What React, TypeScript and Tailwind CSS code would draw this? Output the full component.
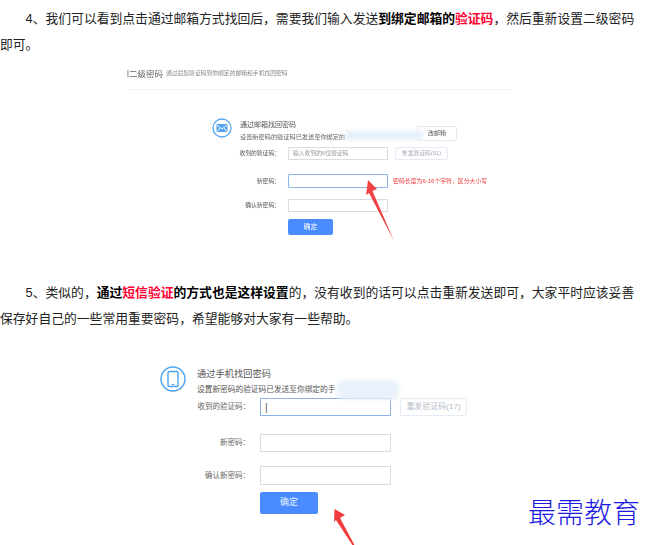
const fontStack = { fontFamily: '"Liberation Sans", "Noto Sans CJK SC", sans-serif' };

function Field({ active, text, className }: { active?: boolean; text?: string; className: string }) {
  return (
    <div
      className={`flex items-center border ${active ? "border-[#8db4e8]" : "border-[#dcdcdc]"} ${className}`}
    >
      {text}
    </div>
  );
}

function ShotOne() {
  return (
    <div className="flex h-[222px] flex-col pl-[127px] text-[#555] blur-[0.7px]">
      <div className="mt-[10px] flex h-[12px] items-center">
        <span className="text-[8.500px] leading-none text-[#666]">l二级密码</span>
        <span className="ml-[3px] text-[5.800px] leading-none text-[#888]">通过后您验证码到你绑定的邮箱和手机找回密码</span>
      </div>
      <div className="ml-[2px] mt-[9px] w-[381px] border-b border-dotted border-[#e2e2e2]" />

      <div className="mt-[28px] flex h-[24px] items-start pl-[85px]">
        <svg width="20" height="20" viewBox="0 0 20 20" className="shrink-0">
          <circle cx="10" cy="10" r="9" fill="none" stroke="#56a5ee" strokeWidth="1.3" />
          <rect x="4.500" y="6" width="11" height="8" rx="1" fill="#56a5ee" />
          <path d="M5 7l5 4 5-4M5 13.500l3-3.500M15 13.500l-3-3.500" fill="none" stroke="#fff" strokeWidth="0.9" />
        </svg>
        <div className="ml-[8px] w-[177px] pt-[1px]">
          <div className="text-[7px] leading-[12px] text-[#555]">通过邮箱找回密码</div>
          <div className="text-[6.200px] leading-[12px] text-[#666]">设置新密码的验证码已发送至你绑定的</div>
        </div>
        <div className="mt-[8px] flex h-[15px] w-[40px] items-center justify-center rounded-[2px] border border-[#e3eaf5] text-[6px]">
          改邮箱
        </div>
      </div>

      <div className="mt-[5px] flex h-[13px] items-center text-[5.800px]">
        <span className="w-[153px] text-right">收到的验证码：</span>
        <Field className="ml-[8px] h-full w-[100px] pl-[4px] text-[#999]" text="输入收到的6位验证码" />
        <div className="ml-[7px] flex h-full w-[53px] items-center justify-center rounded-[2px] border border-[#e3eaf5] text-[#aab]">
          重发验证码(51)
        </div>
      </div>

      <div className="mt-[14px] flex h-[14px] items-center text-[5.800px]">
        <span className="w-[153px] text-right">新密码：</span>
        <Field active className="ml-[8px] h-full w-[100px] rounded-[1px]" />
        <span className="ml-[5px] text-[5.900px] text-[#f03a3a]">密码长度为6-16个字符，区分大小写</span>
      </div>

      <div className="mt-[11px] flex h-[13px] items-center text-[5.800px]">
        <span className="w-[153px] text-right">确认新密码：</span>
        <Field className="ml-[8px] h-full w-[100px]" />
      </div>

      <div className="ml-[161px] mt-[7px] flex h-[16px] w-[45px] items-center justify-center rounded-[2px] bg-[#4a8cff] text-[7px] text-white">
        确定
      </div>
    </div>
  );
}

function ShotTwo() {
  return (
    <div className="flex flex-col pl-[160px] text-[#666]">
      <div className="mt-[35px] flex h-[32px] items-start">
        <svg width="26" height="26" viewBox="0 0 26 26" className="shrink-0">
          <circle cx="13" cy="13" r="12" fill="none" stroke="#4aa3f0" strokeWidth="1.400" />
          <rect x="8" y="5.500" width="10" height="15" rx="1.500" fill="none" stroke="#4aa3f0" strokeWidth="1.400" />
          <rect x="11.500" y="18" width="3" height="1" fill="#4aa3f0" />
        </svg>
        <div className="ml-[11px]">
          <div className="text-[9.250px] leading-[16px] text-[#555]">通过手机找回密码</div>
          <div className="text-[7.700px] leading-[16px] text-[#555]">设置新密码的验证码已发送至你绑定的手</div>
        </div>
      </div>

      <div className="flex h-[18px] items-center text-[7.500px]">
        <span className="w-[90px] text-right">收到的验证码：</span>
        <Field active className="ml-[10px] h-full w-[131px] pl-[4px] text-[10px] text-[#555]" text="|" />
        <div className="ml-[9px] flex h-full w-[67px] items-center justify-center rounded-[2px] border border-[#e3eef9] text-[8px] text-[#b5bcc6]">
          重发验证码(17)
        </div>
      </div>

      <div className="mt-[18px] flex h-[18px] items-center text-[7.500px]">
        <span className="w-[90px] text-right">新密码：</span>
        <Field className="ml-[10px] h-full w-[131px]" />
      </div>

      <div className="mt-[14px] flex h-[19px] items-center text-[7.500px]">
        <span className="w-[90px] text-right">确认新密码：</span>
        <Field className="ml-[10px] h-full w-[131px]" />
      </div>

      <div className="ml-[100px] mt-[7px] flex h-[22px] w-[58px] items-center justify-center rounded-[2px] bg-[#4a8cff] text-[9px] text-[#e8f0ff]">
        确定
      </div>
    </div>
  );
}

export default function App() {
  return (
    <div className="relative h-[545px] w-[650px] overflow-hidden bg-white text-[12.800px] text-[#222]" style={fontStack}>
      <p className="w-[636px] pt-[6px] indent-[25.600px] leading-[26px]">
        4、我们可以看到点击通过邮箱方式找回后，需要我们输入发送<b className="text-black">到绑定邮箱的</b>
        <b className="text-[#ff0033]">验证码</b>，然后重新设置二级密码即可。
      </p>
      <ShotOne />
      <p className="w-[636px] indent-[25.600px] leading-[25.500px]">
        5、类似的，<b className="text-black">通过</b>
        <b className="text-[#ff0033]">短信验证</b>
        <b className="text-black">的方式也是这样设置</b>的，没有收到的话可以点击重新发送即可，大家平时应该妥善保存好自己的一些常用重要密码，希望能够对大家有一些帮助。
      </p>
      <ShotTwo />

      {/* smudges hiding the account in the two screenshots */}
      <div className="absolute left-[345px] top-[131px] h-[9px] w-[78px] bg-[#e6f0fa] blur-[2px]" />
      <div className="absolute left-[337px] top-[380px] h-[20px] w-[62px] rounded-[8px] bg-[#e9f1fa] blur-[2px]" />

      {/* red arrows drawn over the screenshots */}
      <svg className="absolute left-0 top-0" width="650" height="545" viewBox="0 0 650 545">
        <polygon points="368,180 377,189 372.500,191 394,241 369,193 366,195" fill="#ef4444" />
        <polygon points="334.500,509 345,515 340,518 355,546 353,546 336,520 334,522" fill="#ef3b3b" />
      </svg>

      <div className="absolute left-[528px] top-[497px] text-[28px] font-extralight leading-[34px] text-[#1a1ae0]">最需教育</div>
    </div>
  );
}
